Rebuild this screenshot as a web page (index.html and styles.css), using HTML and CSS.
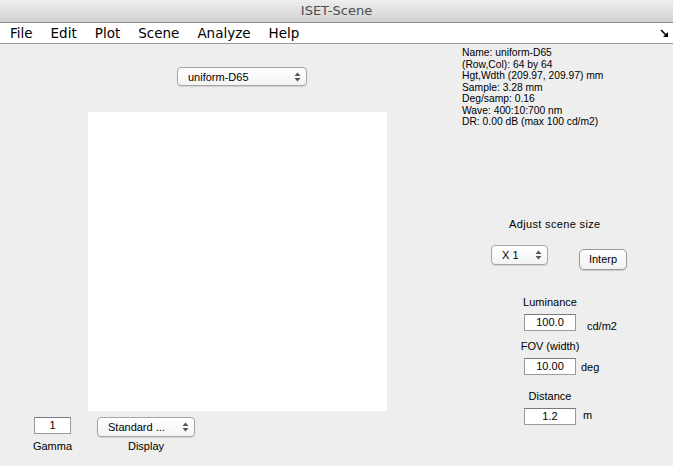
FILE: index.html
```html
<!DOCTYPE html>
<html>
<head>
<meta charset="utf-8">
<title>ISET-Scene</title>
<link rel="stylesheet" href="styles.css">
</head>
<body>
<div class="window">
  <div class="titlebar">ISET-Scene</div>
  <div class="menubar">
    <ul class="menu">
      <li>File</li>
      <li>Edit</li>
      <li>Plot</li>
      <li>Scene</li>
      <li>Analyze</li>
      <li>Help</li>
    </ul>
    <svg class="dock-icon" width="9" height="9" viewBox="0 0 9 9">
      <path d="M1 1 L6 6" stroke="#000" stroke-width="1.6"/>
      <polygon points="8,3 8,8 3,8" fill="#000"/>
    </svg>
  </div>
  <div class="content">
    <div class="left">
      <div class="scene-row">
        <div class="popup popup-scene">
          <span>uniform-D65</span>
          <svg class="arrows" width="7" height="10" viewBox="0 0 7 10"><polygon points="3.5,0.5 6.5,4 0.5,4" fill="#555"/><polygon points="0.5,6 6.5,6 3.5,9.5" fill="#555"/></svg>
        </div>
      </div>
      <div class="image"></div>
      <div class="bottom-row">
        <div class="ctrl ctrl-gamma">
          <div class="field field-gamma">1</div>
          <div class="label">Gamma</div>
        </div>
        <div class="ctrl ctrl-display">
          <div class="popup popup-display">
            <span>Standard ...</span>
            <svg class="arrows" width="7" height="10" viewBox="0 0 7 10"><polygon points="3.5,0.5 6.5,4 0.5,4" fill="#555"/><polygon points="0.5,6 6.5,6 3.5,9.5" fill="#555"/></svg>
          </div>
          <div class="label">Display</div>
        </div>
      </div>
    </div>
    <div class="right">
      <div class="info">
        <div>Name: uniform-D65</div>
        <div>(Row,Col): 64 by 64</div>
        <div>Hgt,Wdth (209.97, 209.97) mm</div>
        <div>Sample: 3.28 mm</div>
        <div>Deg/samp: 0.16</div>
        <div>Wave: 400:10:700 nm</div>
        <div>DR: 0.00 dB (max 100 cd/m2)</div>
      </div>
      <div class="adjust-label">Adjust scene size</div>
      <div class="size-row">
        <div class="popup popup-size">
          <span>X 1</span>
          <svg class="arrows" width="7" height="10" viewBox="0 0 7 10"><polygon points="3.5,0.5 6.5,4 0.5,4" fill="#555"/><polygon points="0.5,6 6.5,6 3.5,9.5" fill="#555"/></svg>
        </div>
        <div class="button">Interp</div>
      </div>
      <div class="params">
        <div class="param param-lum">
          <div class="param-label">Luminance</div>
          <div class="param-row">
            <div class="field">100.0</div>
            <span class="unit unit-lum">cd/m2</span>
          </div>
        </div>
        <div class="param param-fov">
          <div class="param-label">FOV (width)</div>
          <div class="param-row">
            <div class="field">10.00</div>
            <span class="unit unit-fov">deg</span>
          </div>
        </div>
        <div class="param param-dist">
          <div class="param-label">Distance</div>
          <div class="param-row">
            <div class="field">1.2</div>
            <span class="unit unit-dist">m</span>
          </div>
        </div>
      </div>
    </div>
  </div>
</div>
</body>
</html>
```
FILE: styles.css
```css
html, body {
  margin: 0;
  padding: 0;
}
body {
  width: 673px;
  height: 466px;
  overflow: hidden;
  font-family: "Liberation Sans", Arial, sans-serif;
  font-size: 11px;
  color: #000;
  background: #eeeeee;
}
.window {
  display: flex;
  flex-direction: column;
  height: 466px;
}
.titlebar {
  height: 22px;
  border-bottom: 1px solid #8c8c8c;
  background: linear-gradient(#eeeeee, #d2d2d2);
  font-family: "DejaVu Sans", sans-serif;
  font-size: 13px;
  color: #4d4d4d;
  text-align: center;
  line-height: 22px;
}
.menubar {
  height: 20px;
  border-bottom: 1px solid #9a9a9a;
  background: #ffffff;
  display: flex;
  align-items: center;
  justify-content: space-between;
  padding: 0 4px 0 10px;
}
.menu {
  list-style: none;
  margin: 0;
  padding: 0;
  display: flex;
  gap: 18px;
  font-family: "DejaVu Sans", sans-serif;
  font-size: 13.5px;
  line-height: 20px;
}
.dock-icon {
  display: block;
}
.content {
  flex: 1;
  display: flex;
  background: #eeeeee;
}
.left {
  width: 440px;
  display: flex;
  flex-direction: column;
}
.scene-row {
  padding: 23px 0 0 177px;
}
.popup {
  box-sizing: border-box;
  display: flex;
  align-items: center;
  justify-content: space-between;
  border: 1px solid #a6a6a6;
  border-radius: 4px;
  background: linear-gradient(#ffffff, #f3f3f3);
  box-shadow: 0 1px 1px rgba(0, 0, 0, 0.12);
  padding: 0 5px 0 10px;
}
.arrows {
  display: block;
}
.popup-scene {
  width: 130px;
  height: 19px;
}
.image {
  width: 299px;
  height: 299px;
  margin: 26px 0 0 88px;
  background: #ffffff;
}
.bottom-row {
  display: flex;
  margin-top: 6px;
}
.ctrl {
  display: flex;
  flex-direction: column;
  align-items: center;
}
.ctrl-gamma {
  margin-left: 34px;
  width: 37px;
}
.ctrl-display {
  margin-left: 26px;
  width: 98px;
}
.field {
  box-sizing: border-box;
  width: 52px;
  height: 17px;
  background: #ffffff;
  border: 1px solid #9a9a9a;
  border-top-color: #7a7a7a;
  text-align: center;
  line-height: 15px;
}
.field-gamma {
  width: 37px;
}
.ctrl-gamma .label {
  margin-top: 6px;
}
.popup-display {
  width: 98px;
  height: 20px;
}
.ctrl-display .label {
  margin-top: 3px;
}
.label {
  line-height: 13px;
}
.right {
  flex: 1;
  display: flex;
  flex-direction: column;
}
.info {
  padding: 3px 0 0 22px;
  font-size: 10.3px;
  line-height: 11.5px;
}
.adjust-label {
  margin-top: 90px;
  padding-left: 69px;
  line-height: 13px;
  letter-spacing: 0.35px;
}
.size-row {
  display: flex;
  align-items: flex-start;
  margin-top: 14px;
}
.popup-size {
  width: 57px;
  height: 20px;
  margin-left: 51px;
}
.button {
  box-sizing: border-box;
  width: 48px;
  height: 21px;
  margin: 4px 0 0 31px;
  border: 1px solid #9a9a9a;
  border-radius: 5px;
  background: linear-gradient(#ffffff, #f2f2f2);
  box-shadow: 0 1px 1px rgba(0, 0, 0, 0.15);
  text-align: center;
  line-height: 19px;
}
.params {
  display: flex;
  flex-direction: column;
  padding-left: 84px;
  margin-top: 26px;
}
.param-label {
  width: 52px;
  display: flex;
  justify-content: center;
  white-space: nowrap;
  line-height: 13px;
}
.param-row {
  display: flex;
  align-items: flex-start;
  margin-top: 5px;
}
.param-fov {
  margin-top: 7px;
}
.param-dist {
  margin-top: 15px;
}
.unit {
  line-height: 13px;
}
.unit-lum {
  margin-left: 11px;
  padding-top: 6px;
}
.unit-fov {
  margin-left: 5px;
  padding-top: 3px;
}
.unit-dist {
  margin-left: 7px;
  padding-top: 1px;
}
```
